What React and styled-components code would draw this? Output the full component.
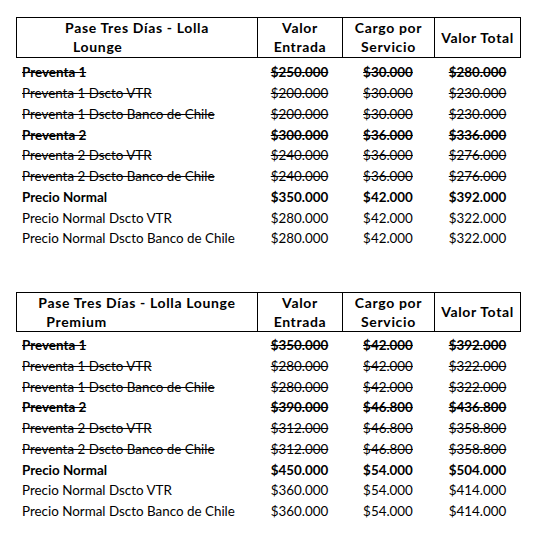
import React from "react";
import styled, { createGlobalStyle } from "styled-components";

const Global = createGlobalStyle`
  html, body { margin: 0; padding: 0; background: #fff; }
  body { font-family: Lato, "Liberation Sans", sans-serif; color: #000; }
`;

const Page = styled.div`
  width: 550px;
  height: 536px;
  padding: 17px 0 0 16px;
  box-sizing: border-box;
  display: flex;
  flex-direction: column;
  gap: ${(p) => p.$gap}px;
`;

const COLS = "241px 85px 92px 87px";

const Table = styled.div`
  display: flex;
  flex-direction: column;
  width: 505px;
`;

const HeaderRow = styled.div`
  display: grid;
  grid-template-columns: ${COLS};
  height: ${(p) => p.$h}px;
  border-top: 1px solid #000;
  border-bottom: 1px solid #000;
  box-sizing: border-box;
`;

const HeadCell = styled.div`
  box-sizing: border-box;
  border-left: 1px solid #000;
  border-right: ${(p) => (p.$last ? "1px solid #000" : "none")};
  display: flex;
  align-items: center;
  justify-content: center;
  text-align: center;
  font-weight: 700;
  font-size: 14px;
  letter-spacing: 0.65px;
  line-height: 19px;
  padding-bottom: 1px;
`;

const TitleBlock = styled.div`
  display: inline-flex;
  flex-direction: column;
  align-items: flex-start;
`;

const TitleSecond = styled.span`
  padding-left: 8px;
`;

const Body = styled.div`
  display: flex;
  flex-direction: column;
  padding-top: ${(p) => p.$pt}px;
`;

const Row = styled.div`
  display: grid;
  grid-template-columns: ${COLS};
  height: 20.75px;
  align-items: center;
  font-size: 13.4px;
  font-weight: ${(p) => (p.$bold ? 700 : 400)};
  text-decoration: ${(p) => (p.$strike ? "line-through" : "none")};
  text-decoration-thickness: 1px;
`;

const Label = styled.div`
  padding-left: 6px;
  white-space: nowrap;
`;

const Value = styled.div`
  text-align: center;
  white-space: nowrap;
`;

const tables = [
  {
    title: ["Pase Tres Días - Lolla", "Lounge"],
    h: 41,
    pt: 4,
    rows: [
      ["Preventa 1", "$250.000", "$30.000", "$280.000", true, true],
      ["Preventa 1 Dscto VTR", "$200.000", "$30.000", "$230.000", false, true],
      ["Preventa 1 Dscto Banco de Chile", "$200.000", "$30.000", "$230.000", false, true],
      ["Preventa 2", "$300.000", "$36.000", "$336.000", true, true],
      ["Preventa 2 Dscto VTR", "$240.000", "$36.000", "$276.000", false, true],
      ["Preventa 2 Dscto Banco de Chile", "$240.000", "$36.000", "$276.000", false, true],
      ["Precio Normal", "$350.000", "$42.000", "$392.000", true, false],
      ["Precio Normal Dscto VTR", "$280.000", "$42.000", "$322.000", false, false],
      ["Precio Normal Dscto Banco de Chile", "$280.000", "$42.000", "$322.000", false, false],
    ],
  },
  {
    title: ["Pase Tres Días - Lolla Lounge", "Premium"],
    h: 40,
    pt: 3,
    rows: [
      ["Preventa 1", "$350.000", "$42.000", "$392.000", true, true],
      ["Preventa 1 Dscto VTR", "$280.000", "$42.000", "$322.000", false, true],
      ["Preventa 1 Dscto Banco de Chile", "$280.000", "$42.000", "$322.000", false, true],
      ["Preventa 2", "$390.000", "$46.800", "$436.800", true, true],
      ["Preventa 2 Dscto VTR", "$312.000", "$46.800", "$358.800", false, true],
      ["Preventa 2 Dscto Banco de Chile", "$312.000", "$46.800", "$358.800", false, true],
      ["Precio Normal", "$450.000", "$54.000", "$504.000", true, false],
      ["Precio Normal Dscto VTR", "$360.000", "$54.000", "$414.000", false, false],
      ["Precio Normal Dscto Banco de Chile", "$360.000", "$54.000", "$414.000", false, false],
    ],
  },
];

function PriceTable({ t }) {
  return (
    <Table>
      <HeaderRow $h={t.h}>
        <HeadCell>
          <TitleBlock>
            <span>{t.title[0]}</span>
            <TitleSecond>{t.title[1]}</TitleSecond>
          </TitleBlock>
        </HeadCell>
        <HeadCell>Valor<br />Entrada</HeadCell>
        <HeadCell>Cargo por<br />Servicio</HeadCell>
        <HeadCell $last>Valor Total</HeadCell>
      </HeaderRow>
      <Body $pt={t.pt}>
        {t.rows.map((r, i) => (
          <Row key={i} $bold={r[4]} $strike={r[5]}>
            <Label>{r[0]}</Label>
            <Value>{r[1]}</Value>
            <Value>{r[2]}</Value>
            <Value>{r[3]}</Value>
          </Row>
        ))}
      </Body>
    </Table>
  );
}

export default function App() {
  return (
    <>
      <Global />
      <Page $gap={43}>
        {tables.map((t, i) => (
          <PriceTable key={i} t={t} />
        ))}
      </Page>
    </>
  );
}
